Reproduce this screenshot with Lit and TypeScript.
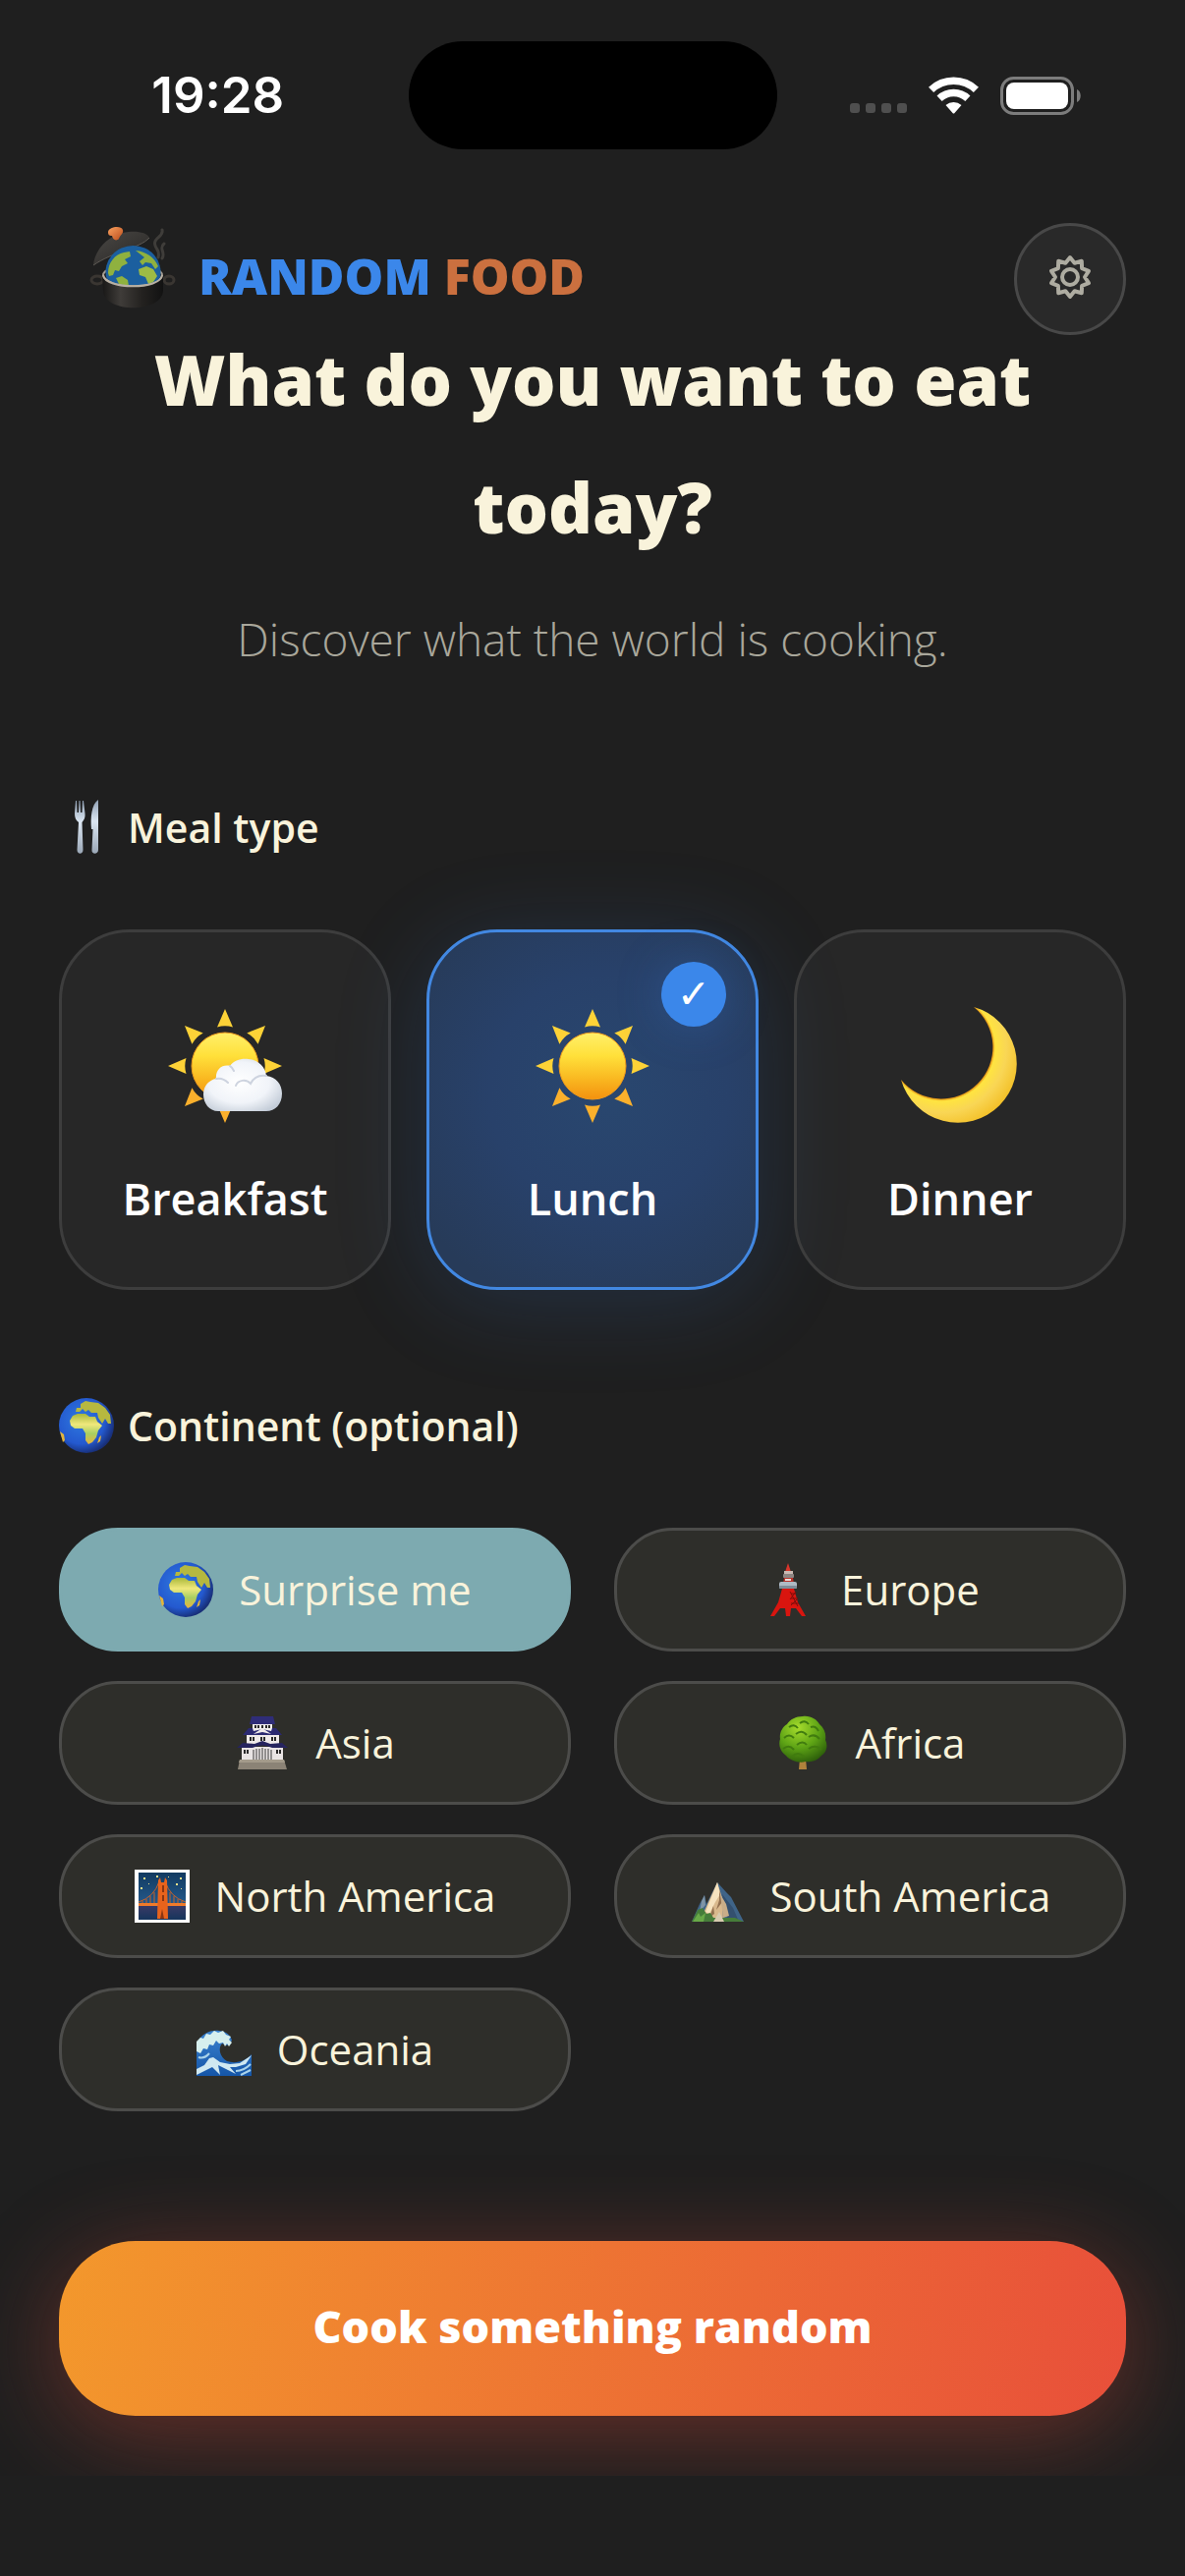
import { LitElement, css, html, svg } from "lit";

// Sun rays, reused by the breakfast and lunch icons
const rays = [0, 45, 90, 135, 180, 225, 270, 315].map(
  (deg) => svg`<path
    d="M60 2 L68 20.5 Q60 18 52 20.5 Z"
    fill="${deg > 90 && deg < 270 ? "#fbb02c" : "#fdd237"}"
    transform="rotate(${deg} 60 60)"
  />`
);

const sunDisc = svg`
  <defs>
    <linearGradient id="sun" x1="0" y1="0" x2="0" y2="1">
      <stop offset="0" stop-color="#fff06a" />
      <stop offset="0.35" stop-color="#ffe03a" />
      <stop offset="0.7" stop-color="#f9b720" />
      <stop offset="1" stop-color="#f3910f" />
    </linearGradient>
  </defs>
  ${rays}
  <circle cx="60" cy="60" r="34" fill="url(#sun)" stroke="#ee9a1c" />
`;

const sunIcon = html`<svg class="meal-icon" viewBox="0 0 120 120" aria-hidden="true">
  ${sunDisc}
</svg>`;

const sunCloudIcon = html`<svg class="meal-icon" viewBox="0 0 120 120" aria-hidden="true">
  ${sunDisc}
  <defs>
    <radialGradient id="cloud" cx="0.45" cy="0.45" r="0.65">
      <stop offset="0" stop-color="#ffffff" />
      <stop offset="0.6" stop-color="#f1f4f9" />
      <stop offset="1" stop-color="#c3ccd8" />
    </radialGradient>
  </defs>
  <path
    d="M53 106 C44 106 38 98 38 89 C38 80 44 74 51 73 C50 64 57 58 65 60 C69 54 77 52 84 53 C94 54 101 61 102 70 C112 71 118 79 118 88 C118 99 111 106 102 106 Z"
    fill="url(#cloud)"
  />
  <path
    d="M51 73 C56 72 60 74 63 77 M65 60 C67 61 68 63 69 65 M71 80 C73 74 82 73 86 78 C89 72 95 69 102 70"
    fill="none"
    stroke="#cdd3df"
    stroke-width="2"
    stroke-linecap="round"
  />
</svg>`;

const moonIcon = html`<svg class="meal-icon" viewBox="0 0 120 120" aria-hidden="true">
  <defs>
    <radialGradient id="moon" gradientUnits="userSpaceOnUse" cx="41" cy="41" r="83">
      <stop offset="0.63" stop-color="#e08a10" />
      <stop offset="0.66" stop-color="#ffe440" />
      <stop offset="0.8" stop-color="#f9d655" />
      <stop offset="1" stop-color="#f3c12a" />
    </radialGradient>
  </defs>
  <path d="M74 0 A60 60 0 1 1 0 74 A52.600 52.600 0 1 0 74 0 Z" fill="url(#moon)" />
</svg>`;

const globeIcon = html`<svg class="icon" viewBox="0 0 56 56" aria-hidden="true">
  <defs>
    <radialGradient id="sea" cx="0.4" cy="0.4" r="0.62">
      <stop offset="0" stop-color="#2f7ae0" />
      <stop offset="0.7" stop-color="#2459cf" />
      <stop offset="1" stop-color="#182f78" />
    </radialGradient>
    <linearGradient id="land" x1="0" y1="0" x2="0" y2="1">
      <stop offset="0" stop-color="#a9b83a" />
      <stop offset="0.35" stop-color="#f0e87c" />
      <stop offset="0.65" stop-color="#a8cf62" />
      <stop offset="1" stop-color="#e9b23c" />
    </linearGradient>
  </defs>
  <circle cx="28" cy="28" r="28" fill="url(#sea)" />
  <path
    d="M11 23 L14 18 L19 16 L27 16 L31 19 L37 19 L39 24 L44 28 L40 33 L38 40 L34 45 L30 47 L27 43 L27 36 L24 31 L16 31 L12 28 Z"
    fill="url(#land)"
  />
  <path
    d="M17 14 L18 10 L22 10 L22 6 L27 3 L32 4 L40 5 L47 10 L52 17 L53 26 L50 26 L47 21 L44 26 L40 20 L39 15 L33 15 L30 12 L27 14 L24 11 L21 14 Z"
    fill="#b6b83f"
  />
  <path d="M41 40 L43 38 L42 44 L39 46 Z M1 34 L5 37 L6 43 L4 45 Z" fill="#e3b53c" />
</svg>`;

const cutleryIcon = html`<svg class="icon" viewBox="0 0 56 56" aria-hidden="true">
  <defs>
    <linearGradient id="steel" x1="0" y1="0" x2="0" y2="1">
      <stop offset="0" stop-color="#8f9fb3" />
      <stop offset="0.4" stop-color="#dbe6f2" />
      <stop offset="1" stop-color="#9aa7b6" />
    </linearGradient>
  </defs>
  <path
    d="M17 1 H18 L18.500 13 H20 L20.500 1 H21.500 L22 13 H23.500 L24 1 H25 L26.500 14 C27 19 25 21 23.500 23 L24.500 51 C24.500 56 18.500 56 18.500 51 L20 23 C17 21 16 18 16 14 Z"
    fill="url(#steel)"
  />
  <path
    d="M40 0 V51 C40 56 33 56 33.500 51 L34.500 30 H33 C32 18 33 5 40 0 Z"
    fill="url(#steel)"
  />
</svg>`;

const towerIcon = html`<svg class="icon" viewBox="0 0 56 56" aria-hidden="true">
  <path d="M28 1 L31 10 H25 Z" fill="#d8352b" />
  <rect x="24" y="9" width="9" height="3" fill="#c9b9b2" />
  <rect x="23" y="12" width="11" height="4" rx="1" fill="#8d8582" />
  <path d="M24 16 H33 L34 22 H23 Z" fill="#b9332a" />
  <rect x="25" y="17" width="6" height="2" fill="#e5dedb" />
  <path d="M22 27 H34 L38 41 L46 55 H42 L36 47 H31 L30 55 H26 L25 47 H20 L14 55 H10 L18 41 Z" fill="#d9150f" />
  <path
    d="M30 30 L38 45 M36 30 L30 38 M38 37 L31 44 M31 32 H36 M31 37 H38 M31 42 H39"
    stroke="#7c0d0a"
    stroke-width="1"
    fill="none"
  />
  <rect x="19" y="20" width="18" height="7" rx="2" fill="#aebac4" />
  <rect x="19" y="24" width="18" height="3" rx="1" fill="#7f8d99" />
</svg>`;

const castleIcon = html`<svg class="icon" viewBox="0 0 56 56" aria-hidden="true">
  <path d="M5 45 H50 L53 55 H3 Z" fill="#8b8376" />
  <path d="M5 45 H50 L51 48 H4 Z" fill="#a49b8b" />
  <rect x="7" y="32" width="42" height="13" fill="#e9e4e4" />
  <rect x="12" y="19" width="33" height="10" fill="#efeaea" />
  <rect x="18" y="8" width="20" height="8" fill="#f2eeee" />
  <path d="M17 1 H39 L41 9 H15 Z" fill="#2f2d78" />
  <path d="M14 13 H18 L19 16 L28 14 L37 16 L38 13 H42 L48 20 H8 Z" fill="#2b2971" />
  <path d="M19 19 L28 13 L37 19 L28 17 Z" fill="#efeaea" />
  <path d="M8 28 L20 29 L28 26 L36 29 L48 28 L54 33 H38 Q28 28 18 33 H2 Z" fill="#26245f" />
  <path
    d="M20 10 h2 v3 h-2 Z M23 10 h2 v3 h-2 Z M27 10 h2 v3 h-2 Z M31 10 h2 v3 h-2 Z M34 10 h2 v3 h-2 Z M15 22 h2 v4 h-2 Z M18 22 h2 v4 h-2 Z M26 22 h2 v4 h-2 Z M29 22 h2 v4 h-2 Z M37 22 h2 v4 h-2 Z M40 22 h2 v4 h-2 Z M9 35 h2 v4 h-2 Z M12 35 h2 v4 h-2 Z M42 35 h2 v4 h-2 Z M45 35 h2 v4 h-2 Z"
    fill="#2a2a2a"
  />
  <path d="M19 35 V45 M22 34 V45 M25 34 V45 M28 33 V45 M31 34 V45 M34 34 V45 M37 35 V45" stroke="#3a3a3a" stroke-width="1" />
</svg>`;

const treeIcon = html`<svg class="icon" viewBox="0 0 56 56" aria-hidden="true">
  <defs>
    <radialGradient id="leaf" cx="0.4" cy="0.25" r="0.8">
      <stop offset="0" stop-color="#a6dc2c" />
      <stop offset="0.55" stop-color="#5da315" />
      <stop offset="1" stop-color="#2b5c0a" />
    </radialGradient>
  </defs>
  <path d="M25 44 H31 L32 55 H24 Z" fill="#b0823c" />
  <path
    d="M28 1 C36 0 42 4 45 9 C50 13 52 19 51 25 C54 31 52 38 47 41 C43 46 37 48 31 47 C24 49 15 46 11 41 C5 37 3 30 5 24 C4 18 7 12 12 9 C15 4 21 1 28 1 Z"
    fill="url(#leaf)"
  />
  <path
    d="M14 12 q5 -4 9 1 M25 8 q5 -4 9 1 M36 12 q5 -2 8 4 M9 23 q5 -5 10 0 M21 19 q6 -5 11 1 M34 22 q6 -4 11 2 M8 34 q6 -5 11 1 M22 30 q6 -5 10 0 M34 34 q7 -5 13 1 M17 42 q6 -6 12 0"
    fill="none"
    stroke="#417c0f"
    stroke-width="2"
  />
</svg>`;

const bridgeIcon = html`<svg class="icon" viewBox="0 0 56 56" aria-hidden="true">
  <defs>
    <linearGradient id="night" x1="0" y1="0" x2="0" y2="1">
      <stop offset="0" stop-color="#123a60" />
      <stop offset="0.65" stop-color="#23588a" />
      <stop offset="0.7" stop-color="#3a3a66" />
      <stop offset="1" stop-color="#16355c" />
    </linearGradient>
  </defs>
  <rect x="0" y="1" width="56" height="54" fill="#ffffff" />
  <rect x="4" y="4" width="48" height="48" fill="url(#night)" />
  <path
    d="M9 9 h2 v2 h-2 Z M22 7 h2 v2 h-2 Z M34 8 h1 v1 h-1 Z M46 9 h2 v2 h-2 Z M6 19 h2 v2 h-2 Z M14 15 h1 v1 h-1 Z M42 15 h2 v2 h-2 Z M47 20 h1 v1 h-1 Z"
    fill="#f2e48a"
  />
  <path
    d="M4 34 Q20 29 25 13 M31 13 Q36 29 52 34 M8 33 V37 M12 31 V37 M16 28 V37 M20 24 V37 M36 24 V37 M40 28 V37 M44 31 V37 M48 33 V37"
    fill="none"
    stroke="#c8622a"
    stroke-width="1"
  />
  <path d="M4 35 H52 V38 H4 Z" fill="#ef7a2b" />
  <path d="M24 12 L26 9 L27 14 H30 L31 9 L33 12 L34 51 H23 Z" fill="#e8631c" />
  <path d="M28 17 H30 V24 H28 Z M28 27 H30 V33 H28 Z M28 41 L30 51 H26 Z" fill="#8a3512" />
</svg>`;

const mountainIcon = html`<svg class="icon" viewBox="0 0 56 56" aria-hidden="true">
  <path d="M2 54 L10 36 L15 27 L17 36 L28 14 L38 25 L42 29 L55 54 Z" fill="#3f6488" />
  <path d="M28 14 L33 30 L34 54 H10 L18 36 Z" fill="#d9b98d" />
  <path d="M28 14 L31 26 L26 34 L20 46 L16 44 Z" fill="#f6e3bf" />
  <path d="M30 22 L33 34 L27 42 L30 32 Z M24 38 L20 50 L25 46 Z" fill="#92704f" />
  <path d="M33 26 L44 40 L50 54 H40 L35 42 Z" fill="#34506f" />
  <path d="M31 26 L37 36 L40 48 L34 50 Z" fill="#c9ad88" />
  <path d="M12 33 L15 27 L16 37 L10 44 Z" fill="#7f94a6" />
  <path d="M2 54 L8 42 L13 40 L17 46 L21 45 L24 50 L34 50 L46 50 L55 54 Z" fill="#467d3a" />
  <path d="M24 54 L30 44 L35 54 Z" fill="#d8cbb0" />
  <path d="M3 54 L9 45 L11 49 L16 45 L14 54 Z" fill="#68a948" />
</svg>`;

const waveIcon = html`<svg class="icon" viewBox="0 0 56 56" aria-hidden="true">
  <defs>
    <linearGradient id="water" x1="0" y1="0" x2="0" y2="1">
      <stop offset="0" stop-color="#3a82cf" />
      <stop offset="1" stop-color="#1556a8" />
    </linearGradient>
  </defs>
  <path
    d="M0 55 V22 C5 12 14 8 23 9 C31 10 35 14 36 19 L31 24 L26 22 C22 26 23 35 31 40 C40 43 50 40 56 33 V55 Z"
    fill="url(#water)"
  />
  <path
    d="M0 30 V20 L4 16 L7 17 L10 12 L14 13 L18 9 L22 11 L27 9 L30 13 L35 15 L33 18 L36 21 L33 25 L31 22 L29 25 L27 21 L23 22 L20 19 L17 24 L13 23 L11 28 L7 27 L4 32 Z"
    fill="#d6efee"
  />
  <path
    d="M0 48 L8 44 L13 37 L17 36 L24 41 L34 43 L44 42 L56 34 L50 43 L40 46 L34 46 L40 53 L30 48 L22 44 L24 54 L16 46 L8 50 L0 54 Z"
    fill="#cfe8f1"
  />
  <path d="M2 36 Q8 38 13 32 M40 50 Q48 50 55 43 M45 54 L55 49" fill="none" stroke="#a9d3ea" stroke-width="2" />
</svg>`;

const logo = html`<svg class="logo" viewBox="0 0 90 90" aria-hidden="true">
  <defs>
    <linearGradient id="lid" x1="0" y1="0" x2="1" y2="1">
      <stop offset="0" stop-color="#4b4946" />
      <stop offset="0.6" stop-color="#353331" />
      <stop offset="1" stop-color="#1e1d1c" />
    </linearGradient>
    <linearGradient id="pot" x1="0" y1="0" x2="1" y2="0">
      <stop offset="0" stop-color="#181716" />
      <stop offset="0.3" stop-color="#3f3c39" />
      <stop offset="0.65" stop-color="#242220" />
      <stop offset="1" stop-color="#121212" />
    </linearGradient>
    <linearGradient id="knob" x1="0" y1="0" x2="1" y2="1">
      <stop offset="0" stop-color="#f9a05e" />
      <stop offset="1" stop-color="#bb4d1c" />
    </linearGradient>
  </defs>
  <path
    d="M77 6 C79 13 67 14 70 22 C71 26 75 27 73 34 M79 20 C73 25 81 29 77 35"
    fill="none"
    stroke="#3f3d3a"
    stroke-width="3"
    stroke-linecap="round"
  />
  <path d="M7 42 C8 27 22 10 43 8 C53 7 62 9 64 14 C54 25 27 28 7 42 Z" fill="url(#lid)" />
  <path d="M7 42 C27 28 54 25 64 14" fill="none" stroke="#5e5a55" stroke-width="1" />
  <path d="M22 8 C23 3 35 1 37 6 C38 10 34 11 33 15 C30 18 27 16 26 12 C23 12 22 11 22 8 Z" fill="url(#knob)" />
  <ellipse cx="11" cy="57" rx="6" ry="4" fill="none" stroke="#3a3632" stroke-width="3" />
  <ellipse cx="84" cy="57" rx="5" ry="4" fill="none" stroke="#3a3632" stroke-width="3" />
  <ellipse cx="47" cy="52" rx="30" ry="10" fill="#171615" stroke="#a39b8f" stroke-width="2" />
  <path d="M20 54 A28 27 0 1 1 75 54 C72 65 24 65 20 54 Z" fill="#1b5f9f" />
  <path
    d="M22 50 C22 39 29 31 38 29 L44 28 L45 33 L39 36 L42 40 L36 43 L33 48 L29 47 L27 52 L23 53 Z"
    fill="#8fb13f"
  />
  <path d="M50 27 C61 28 69 34 73 43 L70 46 L66 40 L60 39 L57 42 L54 38 L59 34 Z" fill="#8fb13f" />
  <path d="M53 46 L61 43 L68 46 L72 53 L68 59 L63 61 L60 54 L54 52 Z" fill="#9dbb45" />
  <path d="M30 55 L36 53 L42 57 L43 63 L33 61 Z" fill="#8fb13f" />
  <path
    d="M16 52 C18 68 77 68 78 52 L78 68 C77 91 18 91 17 68 Z"
    fill="url(#pot)"
  />
  <path d="M17 52 C19 67 76 67 77 52" fill="none" stroke="#b8b0a4" stroke-width="2" />
</svg>`;

// Ten-toothed gear outline, teeth every 36 degrees
const gearPoints = Array.from({ length: 20 }, (_, i) => {
  const radius = i % 2 ? 15 : 20;
  const angle = (i * Math.PI) / 10;
  return `${(24 + radius * Math.sin(angle)).toFixed(1)},${(24 - radius * Math.cos(angle)).toFixed(1)}`;
}).join(" ");

const gearIcon = html`<svg class="gear" viewBox="0 0 48 48" aria-hidden="true">
  <g fill="none" stroke="#aeaca1" stroke-width="4" stroke-linejoin="round">
    <polygon points="${gearPoints}" />
    <circle cx="24" cy="24" r="8" />
  </g>
</svg>`;

const signalIcon = html`<svg class="signal" viewBox="0 0 58 38" aria-hidden="true">
  ${[0, 16, 32, 48].map(
    (x) => svg`<rect x="${x}" y="27" width="10" height="10" rx="3" fill="#4f4f4f" />`
  )}
</svg>`;

const wifiIcon = html`<svg class="wifi" viewBox="0 0 51 38" aria-hidden="true">
  <g fill="none" stroke="#fff" stroke-width="7.500">
    <path d="M2.600 13.400 A33.300 33.300 0 0 1 48.400 13.400" />
    <path d="M11.100 22.300 A21 21 0 0 1 39.900 22.300" />
  </g>
  <path d="M17.500 29 A12.500 12.500 0 0 1 33.500 29 L26.500 37 Q25.500 38 24.500 37 Z" fill="#fff" />
</svg>`;

const batteryIcon = html`<svg class="battery" viewBox="0 0 83 39" aria-hidden="true">
  <rect x="1.500" y="1.500" width="72" height="36" rx="12" fill="none" stroke="#7c7c7c" stroke-width="3" />
  <rect x="6" y="6" width="63" height="27" rx="8" fill="#fff" />
  <path d="M78 13 C83 15 83 24 78 26 Z" fill="#7c7c7c" />
</svg>`;

const meals = [
  { id: "breakfast", label: "Breakfast", icon: sunCloudIcon },
  { id: "lunch", label: "Lunch", icon: sunIcon },
  { id: "dinner", label: "Dinner", icon: moonIcon },
];

const continents = [
  { id: "any", label: "Surprise me", icon: globeIcon },
  { id: "europe", label: "Europe", icon: towerIcon },
  { id: "asia", label: "Asia", icon: castleIcon },
  { id: "africa", label: "Africa", icon: treeIcon },
  { id: "north-america", label: "North America", icon: bridgeIcon },
  { id: "south-america", label: "South America", icon: mountainIcon },
  { id: "oceania", label: "Oceania", icon: waveIcon },
];

export class AppRoot extends LitElement {
  static properties = {
    meal: { state: true },
    continent: { state: true },
  };

  declare meal: string;
  declare continent: string;

  static styles = css`
    :host {
      --bg: #1f1f1f;
      --cream: #f9f3db;
      --blue: #3b87ea;

      display: flex;
      flex-direction: column;
      min-height: 100vh;
      background: var(--bg);
      color: var(--cream);
      font-family: "Open Sans", sans-serif;
    }

    * {
      box-sizing: border-box;
    }

    svg {
      display: block;
      flex: none;
      overflow: visible;
    }

    button {
      margin: 0;
      color: inherit;
      font: inherit;
      cursor: pointer;
    }

    .status {
      display: grid;
      grid-template-columns: 1fr 375px 1fr;
      align-items: center;
      padding-top: 42px;
      color: #fff;
    }

    .time {
      padding-left: 28px;
      text-align: center;
      font-family: "Inter", sans-serif;
      font-size: 51px;
      font-weight: 600;
      line-height: 60px;
    }

    .island {
      height: 110px;
      border-radius: 56px;
      background: #000;
    }

    .indicators {
      display: flex;
      align-items: center;
      justify-content: center;
      gap: 22px;
      padding-right: 30px;
    }

    .signal {
      width: 58px;
    }

    .wifi {
      width: 51px;
    }

    .battery {
      width: 83px;
    }

    main {
      flex: 1;
      padding: 75px 60px 61px;
      overflow: hidden;
    }

    header {
      display: flex;
      align-items: center;
      justify-content: space-between;
      padding-left: 28px;
    }

    .brand {
      display: flex;
      align-items: center;
      gap: 24px;
      padding-bottom: 6px;
      font-size: 50px;
      font-weight: 800;
      line-height: 60px;
    }

    .logo {
      width: 90px;
      margin-bottom: 16px;
    }

    .random {
      color: var(--blue);
    }

    .food {
      color: #cb703f;
    }

    .settings {
      display: grid;
      place-items: center;
      width: 114px;
      height: 114px;
      padding: 0 0 4px;
      border: 3px solid #484848;
      border-radius: 50%;
      background: #292929;
    }

    .gear {
      width: 48px;
    }

    h1 {
      margin: -20px 0 0;
      text-align: center;
      font-size: 70px;
      font-weight: 800;
      line-height: 130px;
    }

    .tagline {
      margin: 36px 0 0;
      color: #a9a79b;
      text-align: center;
      font-size: 46px;
      font-weight: 300;
      line-height: 66px;
    }

    h2 {
      display: flex;
      align-items: center;
      gap: 14px;
      margin: 0 0 74px;
      font-size: 41px;
      font-weight: 600;
      line-height: 60px;
    }

    .icon {
      width: 56px;
    }

    .meal-section {
      margin-top: 129px;
    }

    .continent-section {
      margin-top: 108px;
    }

    .meals {
      display: grid;
      grid-template-columns: repeat(3, 1fr);
      gap: 36px;
    }

    .meal {
      position: relative;
      display: flex;
      flex-direction: column;
      align-items: center;
      gap: 48px;
      padding: 76px 12px 63px;
      border: 3px solid #3d3d3d;
      border-radius: 72px;
      background: rgba(255, 255, 255, 0.04);
      color: #fff;
      font-size: 45px;
      font-weight: 600;
      line-height: 54px;
    }

    .meal.selected {
      border-color: #4288e2;
      background: radial-gradient(circle at 55% 45%, #29476f, #28416a 45%, #273b59 85%);
      box-shadow: 0 12px 96px rgba(59, 135, 234, 0.18);
    }

    .meal-icon {
      width: 120px;
    }

    .check {
      position: absolute;
      top: 30px;
      right: 30px;
      width: 66px;
      height: 66px;
      border-radius: 50%;
      background: var(--blue);
      box-shadow: 0 0 48px rgba(59, 135, 234, 0.25);
      font-family: "DejaVu Sans", sans-serif;
      font-size: 41px;
      font-weight: 700;
      line-height: 66px;
    }

    .continents {
      display: grid;
      grid-template-columns: 1fr 1fr;
      gap: 30px 44px;
    }

    .chip {
      display: flex;
      align-items: center;
      justify-content: center;
      gap: 26px;
      height: 126px;
      padding: 0 24px;
      border: 3px solid #4c4c4a;
      border-radius: 60px;
      background: #2e2e2a;
      font-size: 42px;
      font-weight: 500;
      line-height: 54px;
    }

    .chip.selected {
      border-color: #7daab0;
      background: #7daab0;
    }

    .cook {
      display: block;
      width: 100%;
      height: 178px;
      margin-top: 132px;
      padding: 0 24px 4px;
      border: 0;
      border-radius: 78px;
      background: linear-gradient(99deg, #f3982c, #e84f3a);
      box-shadow: 0 18px 96px rgba(232, 78, 58, 0.36);
      color: #fff;
      font-size: 45px;
      font-weight: 800;
      line-height: 60px;
    }

    .safe-area {
      height: 102px;
    }
  `;

  constructor() {
    super();
    this.meal = "lunch";
    this.continent = "any";
  }

  render() {
    return html`
      <div class="status">
        <div class="time">19:28</div>
        <div class="island"></div>
        <div class="indicators">${signalIcon}${wifiIcon}${batteryIcon}</div>
      </div>
      <main>
        <header>
          <div class="brand">
            ${logo}
            <div><span class="random">RANDOM</span> <span class="food">FOOD</span></div>
          </div>
          <button class="settings" aria-label="Settings">${gearIcon}</button>
        </header>
        <h1>What do you want to eat today?</h1>
        <p class="tagline">Discover what the world is cooking.</p>

        <section class="meal-section">
          <h2>${cutleryIcon} Meal type</h2>
          <div class="meals">
            ${meals.map(
              ({ id, label, icon }) => html`
                <button
                  class="meal ${this.meal === id ? "selected" : ""}"
                  aria-pressed=${this.meal === id}
                  @click=${() => (this.meal = id)}
                >
                  ${icon}
                  <span>${label}</span>
                  ${this.meal === id ? html`<span class="check">✓</span>` : ""}
                </button>
              `
            )}
          </div>
        </section>

        <section class="continent-section">
          <h2>${globeIcon} Continent (optional)</h2>
          <div class="continents">
            ${continents.map(
              ({ id, label, icon }) => html`
                <button
                  class="chip ${this.continent === id ? "selected" : ""}"
                  aria-pressed=${this.continent === id}
                  @click=${() => (this.continent = id)}
                >
                  ${icon}
                  <span>${label}</span>
                </button>
              `
            )}
          </div>
        </section>

        <button class="cook">Cook something random</button>
      </main>
      <div class="safe-area"></div>
    `;
  }
}

customElements.define("app-root", AppRoot);
